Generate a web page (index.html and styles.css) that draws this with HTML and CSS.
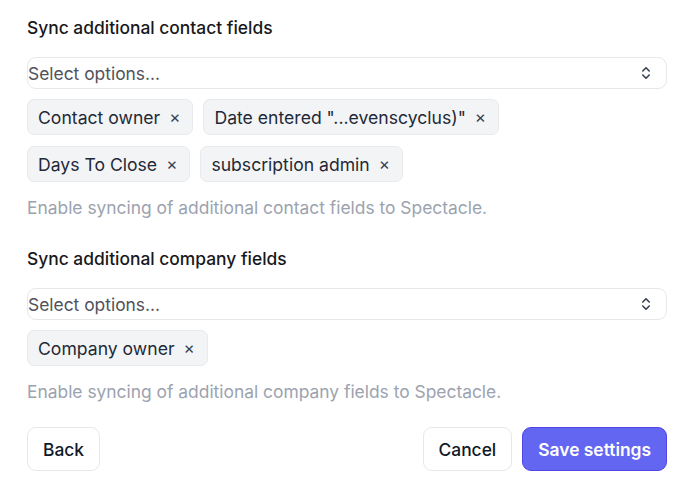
FILE: index.html
```html
<!DOCTYPE html>
<html>
<head>
<meta charset="utf-8">
<link rel="stylesheet" href="styles.css">
</head>
<body>
<div class="page">
  <section class="field">
    <h2 class="label">Sync additional contact fields</h2>
    <div class="select">
      <span class="placeholder">Select options...</span>
      <svg class="chev" width="10" height="16" viewBox="0 0 10 16"><path d="M1.8 6 L5 2.8 L8.2 6 M1.8 10 L5 13.2 L8.2 10" fill="none" stroke="#374151" stroke-width="1.6" stroke-linecap="round" stroke-linejoin="round"/></svg>
    </div>
    <div class="tags">
      <span class="tag">Contact owner<span class="x">×</span></span>
      <span class="tag">Date entered "...evenscyclus)"<span class="x">×</span></span>
      <span class="tag">Days To Close<span class="x">×</span></span>
      <span class="tag">subscription admin<span class="x">×</span></span>
    </div>
    <p class="help">Enable syncing of additional contact fields to Spectacle.</p>
  </section>
  <section class="field second">
    <h2 class="label">Sync additional company fields</h2>
    <div class="select">
      <span class="placeholder">Select options...</span>
      <svg class="chev" width="10" height="16" viewBox="0 0 10 16"><path d="M1.8 6 L5 2.8 L8.2 6 M1.8 10 L5 13.2 L8.2 10" fill="none" stroke="#374151" stroke-width="1.6" stroke-linecap="round" stroke-linejoin="round"/></svg>
    </div>
    <div class="tags">
      <span class="tag">Company owner<span class="x">×</span></span>
    </div>
    <p class="help">Enable syncing of additional company fields to Spectacle.</p>
  </section>
  <div class="actions">
    <button class="btn">Back</button>
    <div class="right">
      <button class="btn">Cancel</button>
      <button class="btn primary">Save settings</button>
    </div>
  </div>
</div>
</body>
</html>
```
FILE: styles.css
```css
* { box-sizing: border-box; }
html, body { margin: 0; background: #fff; }
body { font-family: Inter, "Noto Sans", sans-serif; color: #111827; }
.page { width: 640px; margin-left: 27px; padding-top: 15px; }
.label { margin: 0 0 17px; font-size: 17.4px; line-height: 25px; font-weight: 500; color: #18181b; }
.select { height: 32px; border: 1px solid #e5e7eb; border-radius: 9px; display: flex; align-items: center; justify-content: space-between; padding: 0 15px 0 0; }
.placeholder { font-size: 17.4px; color: #52525b; }
.chev { display: block; }
.tags { display: flex; flex-wrap: wrap; gap: 11px 10px; margin-top: 10px; }
.tag { display: inline-flex; align-items: center; height: 36px; padding: 0 12px 0 10px; background: #f3f4f6; border: 1px solid #e9eaee; border-radius: 7px; font-size: 17.6px; color: #1f2937; }
.x { margin-left: 9px; font-size: 17px; color: #374151; }
.help { margin: 13px 0 0; font-size: 17.4px; line-height: 26px; color: #9ca3af; }
.second { margin-top: 25px; }
.actions { display: flex; justify-content: space-between; margin-top: 22px; }
.right { display: flex; gap: 10px; }
.btn { height: 44px; padding: 0 15px; border: 1px solid #e5e7eb; border-radius: 9px; background: #fff; font-family: Inter, sans-serif; font-size: 17.4px; font-weight: 500; color: #111827; }
.btn.primary { background: #6366f1; border-color: #4f46e5; color: #fff; font-weight: 600; }
```
